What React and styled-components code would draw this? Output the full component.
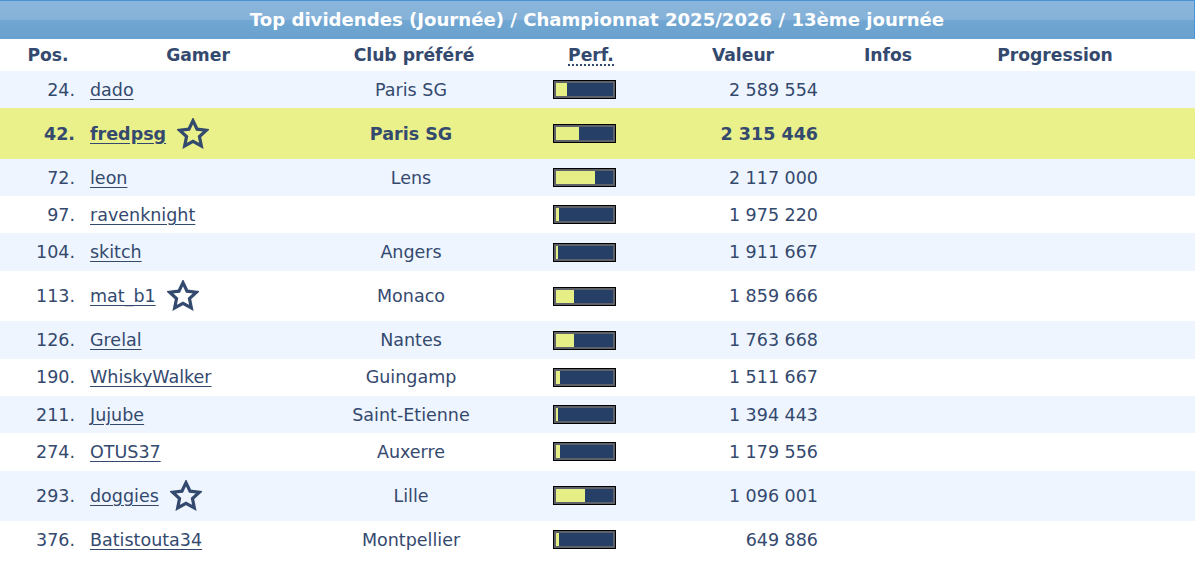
import React from "react";
import styled, { createGlobalStyle } from "styled-components";

const GlobalStyle = createGlobalStyle`
  html, body {
    margin: 0;
    padding: 0;
    background: #ffffff;
  }
  body {
    font-family: "DejaVu Sans", Verdana, sans-serif;
    color: #34496e;
  }
`;

const columns = "84px 228px 204px 150px 154px 136px 198px 1fr";

const players = [
  { pos: 24, name: "dado", club: "Paris SG", perf: 20, value: "2 589 554" },
  { pos: 42, name: "fredpsg", club: "Paris SG", perf: 41, value: "2 315 446", star: true, me: true },
  { pos: 72, name: "leon", club: "Lens", perf: 69, value: "2 117 000" },
  { pos: 97, name: "ravenknight", club: "", perf: 5, value: "1 975 220" },
  { pos: 104, name: "skitch", club: "Angers", perf: 3, value: "1 911 667" },
  { pos: 113, name: "mat_b1", club: "Monaco", perf: 31, value: "1 859 666", star: true },
  { pos: 126, name: "Grelal", club: "Nantes", perf: 31, value: "1 763 668" },
  { pos: 190, name: "WhiskyWalker", club: "Guingamp", perf: 7, value: "1 511 667" },
  { pos: 211, name: "Jujube", club: "Saint-Etienne", perf: 3, value: "1 394 443" },
  { pos: 274, name: "OTUS37", club: "Auxerre", perf: 7, value: "1 179 556" },
  { pos: 293, name: "doggies", club: "Lille", perf: 51, value: "1 096 001", star: true },
  { pos: 376, name: "Batistouta34", club: "Montpellier", perf: 5, value: "649 886" },
];

const Board = styled.div`
  width: 1195px;
`;

const TitleBar = styled.div`
  height: 39px;
  box-sizing: border-box;
  border-top: 1px solid #4a93d6;
  border-right: 1px solid #4a93d6;
  background: linear-gradient(
    to bottom,
    #8ab6db 0%,
    #86b2d9 48%,
    #70a6d1 52%,
    #6aa1ce 100%
  );
  color: #ffffff;
  font-weight: bold;
  font-size: 18.1px;
  display: flex;
  align-items: center;
  justify-content: center;
  padding-bottom: 1px;
`;

const HeadRow = styled.div`
  display: grid;
  grid-template-columns: ${columns};
  height: 32px;
  align-items: center;
  font-weight: bold;
  font-size: 17.2px;
`;

const HeadCell = styled.div`
  text-align: center;
  padding-left: ${(p) => p.$shift || 0}px;
`;

const Abbr = styled.span`
  border-bottom: 2px dotted #34496e;
  line-height: 18px;
  display: inline-block;
`;

const Row = styled.div`
  display: grid;
  grid-template-columns: ${columns};
  align-items: center;
  min-height: 37.3px;
  padding: ${(p) => (p.$tall ? "9.3px 0" : "0")};
  box-sizing: border-box;
  background: ${(p) => (p.$me ? "#eaf08a" : p.$alt ? "#eef5fe" : "#ffffff")};
  font-size: 17.5px;
  font-weight: ${(p) => (p.$me ? "bold" : "normal")};
`;

const PosCell = styled.div`
  text-align: right;
  padding-right: 9px;
`;

const GamerCell = styled.div`
  display: flex;
  align-items: center;
  gap: 11px;
  padding-left: 6px;
  height: ${(p) => (p.$tall ? "32px" : "auto")};
`;

const GamerLink = styled.a`
  color: #34496e;
  text-decoration: underline;
  text-underline-offset: 3px;
  cursor: pointer;
`;

const ClubCell = styled.div`
  text-align: center;
  padding-right: 6px;
`;

const PerfCell = styled.div`
  padding-left: 37px;
  display: flex;
`;

const Bar = styled.div`
  width: 63px;
  height: 19px;
  box-sizing: border-box;
  border: 1px solid #000000;
  background: #5e6268;
  padding: 2px;
  display: flex;
`;

const BarTrack = styled.div`
  flex: 1;
  background: #253f66;
  display: flex;
`;

const BarFill = styled.div`
  background: #e6ee86;
  height: 100%;
`;

const ValueCell = styled.div`
  text-align: right;
  padding-right: 2px;
`;

const Star = () => (
  <svg width="32" height="32" viewBox="0 0 24 24" fill="none">
    <path
      d="M12 2l3.05 6.4 7 .8-5.2 4.8 1.4 6.95L12 17.45l-6.25 3.5 1.4-6.95-5.2-4.8 7-.8z"
      stroke="#34496e"
      strokeWidth="2.4"
      strokeLinejoin="miter"
    />
  </svg>
);

export default function App() {
  return (
    <>
      <GlobalStyle />
      <Board>
        <TitleBar>
          Top dividendes (Journée) / Championnat 2025/2026 / 13ème journée
        </TitleBar>
        <HeadRow>
          <HeadCell $shift={12}>Pos.</HeadCell>
          <HeadCell>Gamer</HeadCell>
          <HeadCell>Club préféré</HeadCell>
          <HeadCell>
            <Abbr title="Performance">Perf.</Abbr>
          </HeadCell>
          <HeadCell>Valeur</HeadCell>
          <HeadCell>Infos</HeadCell>
          <HeadCell>Progression</HeadCell>
          <HeadCell />
        </HeadRow>
        {players.map((p, i) => (
          <Row key={p.pos} $alt={i % 2 === 0} $me={p.me} $tall={p.star}>
            <PosCell>{p.pos}.</PosCell>
            <GamerCell $tall={p.star}>
              <GamerLink>{p.name}</GamerLink>
              {p.star && <Star />}
            </GamerCell>
            <ClubCell>{p.club}</ClubCell>
            <PerfCell>
              <Bar>
                <BarTrack>
                  <BarFill style={{ width: `${p.perf}%` }} />
                </BarTrack>
              </Bar>
            </PerfCell>
            <ValueCell>{p.value}</ValueCell>
            <div />
            <div />
            <div />
          </Row>
        ))}
      </Board>
    </>
  );
}
